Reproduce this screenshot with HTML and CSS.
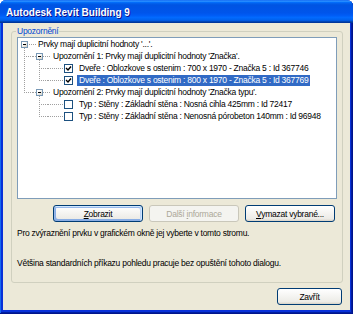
FILE: index.html
```html
<!DOCTYPE html>
<html lang="cs">
<head>
    <meta charset="UTF-8">
    <title>Autodesk Revit Building 9</title>
    <link rel="stylesheet" href="styles.css">
</head>
<body>
    <div class="window">
        <div class="titlebar">
            <span class="title">Autodesk Revit Building 9</span>
        </div>
        <div class="client">
            <fieldset class="group">
                <legend>Upozornění</legend>
                <div class="tree">
                    <div class="row">
                        <span class="cell node root down"><span class="expander"></span></span>
                        <span class="label">Prvky mají duplicitní hodnoty '...'.</span>
                    </div>
                    <div class="row">
                        <span class="cell t"></span>
                        <span class="cell node down"><span class="expander"></span></span>
                        <span class="label">Upozornění 1: Prvky mají duplicitní hodnoty 'Značka'.</span>
                    </div>
                    <div class="row">
                        <span class="cell v"></span>
                        <span class="cell t"></span>
                        <span class="cell h"></span>
                        <span class="check checked"></span>
                        <span class="label">Dveře : Oblozkove s ostenim : 700 x 1970 - Značka 5 : Id 367746</span>
                    </div>
                    <div class="row">
                        <span class="cell v"></span>
                        <span class="cell l"></span>
                        <span class="cell h"></span>
                        <span class="check checked"></span>
                        <span class="label selected">Dveře : Oblozkove s ostenim : 800 x 1970 - Značka 5 : Id 367769</span>
                    </div>
                    <div class="row">
                        <span class="cell l"></span>
                        <span class="cell node down"><span class="expander"></span></span>
                        <span class="label">Upozornění 2: Prvky mají duplicitní hodnoty 'Značka typu'.</span>
                    </div>
                    <div class="row">
                        <span class="cell"></span>
                        <span class="cell t"></span>
                        <span class="cell h"></span>
                        <span class="check"></span>
                        <span class="label">Typ : Stěny : Základní stěna : Nosná cihla 425mm : Id 72417</span>
                    </div>
                    <div class="row">
                        <span class="cell"></span>
                        <span class="cell l"></span>
                        <span class="cell h"></span>
                        <span class="check"></span>
                        <span class="label">Typ : Stěny : Základní stěna : Nenosná pórobeton 140mm : Id 96948</span>
                    </div>
                </div>
                <div class="buttons">
                    <button class="btn default"><u>Z</u>obrazit</button>
                    <button class="btn" disabled>Další <u>i</u>nformace</button>
                    <button class="btn"><u>V</u>ymazat vybrané...</button>
                </div>
                <p class="hint">Pro zvýraznění prvku v grafickém okně jej vyberte v tomto stromu.</p>
                <p class="hint second">Většina standardních příkazu pohledu pracuje bez opuštění tohoto dialogu.</p>
            </fieldset>
            <div class="footer">
                <button class="btn close">Zavřít</button>
            </div>
        </div>
    </div>
</body>
</html>
```

FILE: styles.css
```css
:root {
    --dv: repeating-linear-gradient(to bottom, #a0a0a0 0 1px, transparent 1px 2px);
    --dh: repeating-linear-gradient(to right, #a0a0a0 0 1px, transparent 1px 2px);
}
body {
    margin: 0;
    background: #fff;
    font-family: "Liberation Sans", Arial, sans-serif;
    font-size: 8.5px;
    letter-spacing: -0.25px;
    color: #000;
}
.window {
    width: 353px;
    height: 314px;
    display: flex;
    flex-direction: column;
    background: #0831d9;
    border-radius: 6px 6px 0 0;
    box-shadow: inset -1px -1px #00138c, inset 1px 0 #166aee, inset -2px -2px #001ea0;
}
.titlebar {
    height: 23px;
    flex: none;
    display: flex;
    align-items: center;
    padding-left: 6px;
    border-radius: 6px 6px 0 0;
    background: linear-gradient(to bottom, #0058ee 0%, #3593ff 4%, #288eff 6%, #127dff 8%, #036ffc 10%, #0262ee 14%, #0057e5 20%, #0054e3 24%, #0055eb 56%, #005bf5 66%, #026afe 76%, #0062ef 86%, #0052d6 92%, #0040ab 94%, #003092 100%);
}
.title {
    color: #fff;
    font-weight: bold;
    font-size: 10px;
    letter-spacing: 0;
    text-shadow: 1px 1px #0f1089;
    padding-top: 1px;
}
.client {
    flex: 1;
    margin: 0 3px 4px 3px;
    background: #ece9d8;
    display: flex;
    flex-direction: column;
}
.group {
    margin: 3px 7px 0 8px;
    padding: 1px 5px 13px 5px;
    border: 1px solid #d0d0bf;
    border-radius: 3px;
    min-width: 0;
}
.group legend {
    color: #0046d5;
    padding: 0 1px;
    margin-left: -1px;
    line-height: 10px;
}
.tree {
    height: 160px;
    background: #fff;
    border: 1px solid #7f9db9;
}
.row {
    display: flex;
    align-items: center;
    height: 12px;
}
.cell {
    width: 15px;
    height: 12px;
    flex: none;
    display: flex;
    align-items: center;
    background-repeat: no-repeat;
}
.v {
    background-image: var(--dv);
    background-size: 1px 100%;
    background-position: 6px 0;
}
.t {
    background-image: var(--dv), var(--dh);
    background-size: 1px 100%, 9px 1px;
    background-position: 6px 0, 6px 6px;
}
.l {
    background-image: var(--dv), var(--dh);
    background-size: 1px 7px, 9px 1px;
    background-position: 6px 0, 6px 6px;
}
.h {
    background-image: var(--dh);
    background-size: 100% 1px;
    background-position: 0 6px;
}
.node {
    width: 18px;
    background-image: var(--dh);
    background-size: 100% 1px;
    background-position: 0 6px;
}
.node.down {
    background-image: var(--dh), var(--dv);
    background-size: 100% 1px, 1px 6px;
    background-position: 0 6px, 6px 6px;
}
.node.root {
    background-size: 9px 1px, 1px 6px;
    background-position: 9px 6px, 6px 6px;
}
.expander {
    width: 5px;
    height: 5px;
    margin-left: 3px;
    border: 1px solid #7898b5;
    background: linear-gradient(#000, #000) center / 3px 1px no-repeat, linear-gradient(135deg, #fff 30%, #d4d0c4);
}
.check {
    width: 7px;
    height: 7px;
    flex: none;
    margin-left: 1px;
    border: 1px solid #1c5180;
    background: #fff;
}
.check.checked {
    background: url("data:image/svg+xml,%3Csvg xmlns='http://www.w3.org/2000/svg' width='7' height='7'%3E%3Cpath d='M1 3 L3 5 L6 1.5' stroke='%23000' stroke-width='1.4' fill='none'/%3E%3C/svg%3E") center no-repeat, #fff;
}
.label {
    padding: 0 2px;
    line-height: 11px;
    white-space: nowrap;
}
.check + .label {
    margin-left: 4px;
}
.label.selected {
    background: #316ac5;
    color: #fff;
}
.buttons {
    display: flex;
    justify-content: flex-end;
    gap: 6px;
    margin-top: 6px;
    padding-right: 2px;
}
.btn {
    font-family: inherit;
    font-size: 8.5px;
    letter-spacing: -0.25px;
    color: #000;
    height: 17px;
    width: 90px;
    padding: 0;
    border: 1px solid #003c74;
    border-radius: 3px;
    background: linear-gradient(180deg, #fff, #ecebe6 86%, #d6d0c5);
}
.btn.default {
    box-shadow: inset -1px 1px #cee7ff, inset 1px 2px #98b8ea, inset -2px 2px #bcd4f6, inset 1px -1px #89ade4, inset 2px -2px #89ade4;
}
.btn:disabled {
    color: #aca899;
    border-color: #c9c7ba;
    background: #f4f4f0;
}
.hint {
    margin: 5px 0 0 0;
    line-height: 12px;
    white-space: nowrap;
}
.hint.second {
    margin-top: 18px;
}
.footer {
    display: flex;
    justify-content: flex-end;
    padding: 5px 8px 0 0;
}
.btn.close {
    width: 65px;
}
```
